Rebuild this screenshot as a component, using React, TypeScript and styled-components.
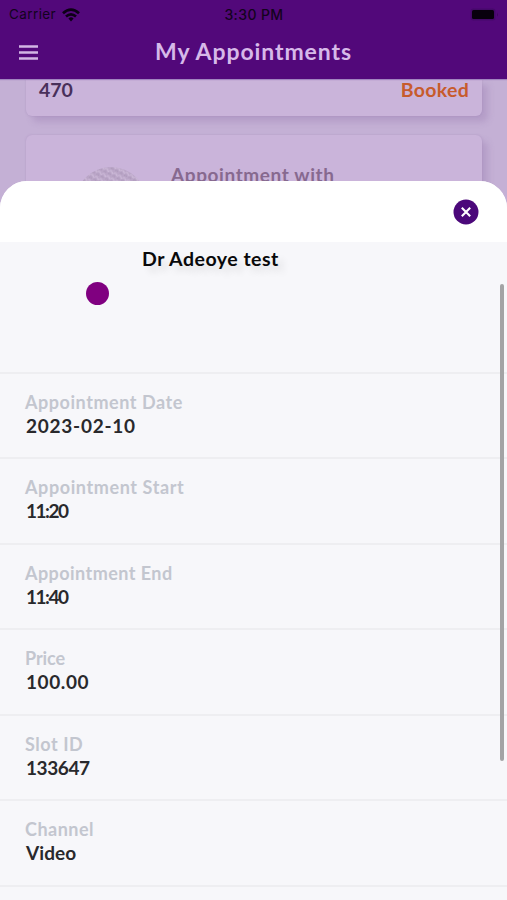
import React from 'react';
import styled, { createGlobalStyle } from 'styled-components';

const GlobalStyle = createGlobalStyle`
  * { box-sizing: border-box; }
  body { margin: 0; background: #c4b0d5; }
`;

const Screen = styled.div`
  position: relative;
  width: 507px;
  height: 900px;
  overflow: hidden;
  background: #c4b0d5;
  font-family: Lato, 'Noto Sans', sans-serif;
`;

const TopBar = styled.header`
  position: relative;
  z-index: 1;
  height: 79px;
  background: #52087a;
  box-shadow: 0 1px 1px #a184bf;
`;

const StatusBar = styled.div`
  display: grid;
  grid-template-columns: 1fr auto 1fr;
  align-items: center;
  height: 27px;
  padding: 0 8px 0 9px;
  color: #13031d;
  font: 400 13.5px/27px Inter, 'Liberation Sans', sans-serif;
`;

const Carrier = styled.div`
  display: flex;
  align-items: center;
  gap: 6px;
  padding-top: 1px;
  letter-spacing: 0.4px;
`;

const Clock = styled.div`
  padding-top: 1px;
  font-size: 14px;
  font-weight: 500;
  letter-spacing: 0.4px;
`;

const BatterySlot = styled.div`
  display: flex;
  justify-content: flex-end;
`;

const NavRow = styled.div`
  display: grid;
  grid-template-columns: 38px 1fr 38px;
  align-items: center;
  height: 49px;
`;

const MenuButton = styled.button`
  display: flex;
  padding: 2px 0 0 19px;
  border: 0;
  background: none;
`;

const Spaced = styled.span<{ $spacing?: number }>`
  letter-spacing: ${({ $spacing = 0 }) => $spacing}px;
  white-space: nowrap;
`;

const Title = styled.h1`
  margin: 0;
  padding-bottom: 2px;
  color: #d6b9e9;
  font-size: 23px;
  font-weight: 700;
  line-height: 30px;
  text-align: center;
`;

const CardList = styled.main`
  display: flex;
  flex-direction: column;
  gap: 19px;
  padding: 0 25px 0 26px;
`;

const Card = styled.article`
  flex: none;
  border-radius: 6px;
  background: #cab4da;
  box-shadow: 6px 6px 6px rgba(139, 108, 165, 0.28), 0 0 2px rgba(139, 108, 165, 0.35);
`;

const SummaryCard = styled(Card)`
  display: flex;
  justify-content: space-between;
  align-items: flex-start;
  height: 37px;
  padding: 0 13px;
  border-radius: 0 0 6px 6px;
  color: #49305a;
  font-size: 19.5px;
  font-weight: 700;
  line-height: 22px;
`;

const Status = styled.span`
  color: #c75b2c;
`;

const DoctorCard = styled(Card)`
  display: flex;
  height: 170px;
  padding: 28px 0 0 52px;
  color: #87698f;
  font-size: 19px;
  font-weight: 700;
  line-height: 24px;
`;

const Portrait = styled.svg`
  flex: none;
  margin: 3px 27px 0 0;
`;

const Sheet = styled.section`
  position: absolute;
  z-index: 2;
  inset: 181px 0 0;
  overflow: hidden;
  border-radius: 27px 27px 0 0;
  background: #f7f7fa;
`;

const SheetHeader = styled.div`
  display: flex;
  justify-content: flex-end;
  align-items: center;
  height: 61px;
  padding-right: 28px;
  background: #fff;
`;

const CloseButton = styled.button`
  display: flex;
  padding: 0;
  border: 0;
  background: none;
`;

const Doctor = styled.div`
  height: 130px;
  padding: 4px 0 0 86px;
`;

const DoctorName = styled.h2`
  margin: 0 0 10px 56px;
  color: #09090a;
  font-size: 19.5px;
  font-weight: 700;
  line-height: 26px;
  text-shadow: 6px 6px 7px rgba(0, 0, 0, 0.1);
`;

const Presence = styled.div`
  width: 23px;
  height: 23px;
  border-radius: 50%;
  background: #800080;
`;

const Details = styled.dl`
  margin: 0;
`;

const Detail = styled.div`
  height: 85.45px;
  padding: 16px 25px 0;
  border-top: 2px solid #eeeef1;
`;

const Label = styled.dt`
  color: #c3c6cf;
  font-size: 18px;
  font-weight: 700;
  line-height: 24px;
`;

const Value = styled.dd`
  margin: 0;
  padding-left: 1px;
  color: #29292c;
  font-size: 19px;
  font-weight: 700;
  line-height: 24px;
`;

const ScrollThumb = styled.div`
  position: absolute;
  top: 103px;
  right: 3px;
  width: 4px;
  height: 477px;
  border-radius: 2px;
  background: #a3a3a5;
`;

const details = [
  { label: 'Appointment Date', labelSpacing: 0.55, value: '2023-02-10', valueSpacing: 0.75 },
  { label: 'Appointment Start', labelSpacing: 0.6, value: '11:20', valueSpacing: -1.5 },
  { label: 'Appointment End', labelSpacing: 0.45, value: '11:40', valueSpacing: -1.5 },
  { label: 'Price', labelSpacing: -0.1, value: '100.00', valueSpacing: 0.6 },
  { label: 'Slot ID', labelSpacing: 0.55, value: '133647', valueSpacing: -0.4 },
  { label: 'Channel', labelSpacing: 0.5, value: 'Video', valueSpacing: 0.1 },
];

export default function App() {
  return (
    <Screen>
      <GlobalStyle />
      <TopBar>
        <StatusBar>
          <Carrier>
            <span>Carrier</span>
            <svg width="18" height="14" viewBox="0 0 18 14" fill="none" stroke="#0c0115" strokeWidth="2.7">
              <path d="M1 5.2Q9-2 17 5.2M4 8.5Q9 4.2 14 8.5" />
              <path d="M6.4 10.4Q9 8.1 11.6 10.4L9 13.4Z" fill="#0c0115" stroke="none" />
            </svg>
          </Carrier>
          <Clock>3:30 PM</Clock>
          <BatterySlot>
            <svg width="29" height="13" viewBox="0 0 29 13">
              <rect x="0.5" y="0.5" width="25" height="12" rx="3" fill="#45086a" />
              <rect x="2" y="2" width="22" height="9" rx="1.5" fill="#08000d" />
              <path d="M27 4.5Q28.5 6.5 27 8.5Z" fill="#3b0759" />
            </svg>
          </BatterySlot>
        </StatusBar>
        <NavRow>
          <MenuButton aria-label="Menu">
            <svg width="19" height="15" viewBox="0 0 19 15" stroke="#d2b5e5" strokeWidth="2.6">
              <path d="M0 1.5H19M0 7.5H19M0 13.5H19" />
            </svg>
          </MenuButton>
          <Title><Spaced $spacing={0.9}>My Appointments</Spaced></Title>
        </NavRow>
      </TopBar>

      <CardList>
        <SummaryCard>
          <Spaced>470</Spaced>
          <Status><Spaced $spacing={0.3}>Booked</Spaced></Status>
        </SummaryCard>
        <DoctorCard>
          <Portrait width="66" height="66" viewBox="0 0 66 66">
            <defs>
              <pattern id="curls" width="5" height="6" patternUnits="userSpaceOnUse" patternTransform="rotate(28)">
                <rect width="5" height="6" fill="#bba6c8" />
                <path d="M0 1.5Q1.5 0 3 1.5T5 2" stroke="#cdbbd9" strokeWidth="1.1" fill="none" />
                <path d="M0 4.5Q2 3 3 4.5" stroke="#a895b6" strokeWidth="0.9" fill="none" />
              </pattern>
            </defs>
            <circle cx="33" cy="37" r="36" fill="url(#curls)" />
          </Portrait>
          <Spaced $spacing={0.6}>Appointment with</Spaced>
        </DoctorCard>
      </CardList>

      <Sheet>
        <SheetHeader>
          <CloseButton aria-label="Close">
            <svg width="26" height="26" viewBox="0 0 26 26">
              <circle cx="13" cy="13" r="12.5" fill="#4b087a" />
              <path d="M8.8 8.8L17.2 17.2M17.2 8.8L8.8 17.2" stroke="#fff" strokeWidth="2.1" />
            </svg>
          </CloseButton>
        </SheetHeader>
        <Doctor>
          <DoctorName><Spaced $spacing={0.5}>Dr Adeoye test</Spaced></DoctorName>
          <Presence />
        </Doctor>
        <Details>
          {details.map(({ label, labelSpacing, value, valueSpacing }) => (
            <Detail key={label}>
              <Label><Spaced $spacing={labelSpacing}>{label}</Spaced></Label>
              <Value><Spaced $spacing={valueSpacing}>{value}</Spaced></Value>
            </Detail>
          ))}
          <Detail />
        </Details>
        <ScrollThumb />
      </Sheet>
    </Screen>
  );
}
